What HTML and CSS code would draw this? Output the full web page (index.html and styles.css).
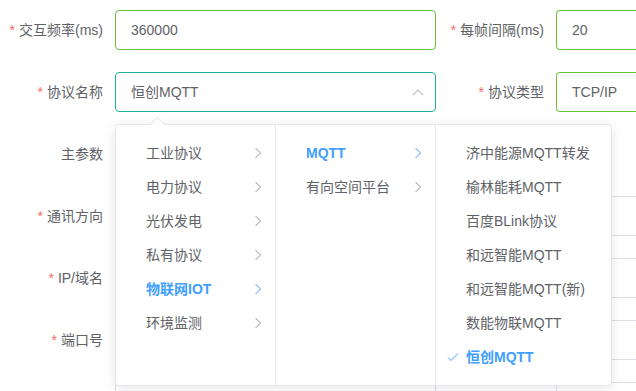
FILE: index.html
```html
<!DOCTYPE html>
<html lang="zh-CN">
<head>
    <meta charset="UTF-8">
    <meta name="viewport" content="width=device-width, initial-scale=1.0">
    <title>协议配置</title>
    <link rel="stylesheet" href="styles.css">
</head>
<body>

    <form class="form">
        <div class="row">
            <div class="item">
                <label class="label label-first"><span class="req">*</span>交互频率(ms)</label>
                <div class="control"><div class="input success">360000</div></div>
            </div>
            <div class="item">
                <label class="label label-second"><span class="req">*</span>每帧间隔(ms)</label>
                <div class="control control-second"><div class="input success">20</div></div>
            </div>
        </div>

        <div class="row">
            <div class="item">
                <label class="label label-first"><span class="req">*</span>协议名称</label>
                <div class="control">
                    <div class="input focus">
                        恒创MQTT
                        <span class="suffix">
                            <svg width="12" height="8" viewBox="0 0 12 8"><polyline points="1,7 6,2 11,7" fill="none" stroke="currentColor" stroke-width="1.2"/></svg>
                        </span>
                    </div>
                </div>
            </div>
            <div class="item">
                <label class="label label-second"><span class="req">*</span>协议类型</label>
                <div class="control control-second"><div class="input success">TCP/IP</div></div>
            </div>
        </div>

        <div class="row">
            <div class="item">
                <label class="label label-first">主参数</label>
            </div>
        </div>

        <!-- 以下行的右侧标签被下拉面板挡住，只保留占位 -->
        <div class="row">
            <div class="item">
                <label class="label label-first"><span class="req">*</span>通讯方向</label>
                <div class="control"><div class="input"></div></div>
            </div>
            <div class="item">
                <span class="label label-second"></span>
                <div class="control control-second"><div class="input"></div></div>
            </div>
        </div>

        <div class="row">
            <div class="item">
                <label class="label label-first"><span class="req">*</span>IP/域名</label>
                <div class="control"><div class="input"></div></div>
            </div>
            <div class="item">
                <span class="label label-second"></span>
                <div class="control control-second"><div class="input"></div></div>
            </div>
        </div>

        <div class="row">
            <div class="item">
                <label class="label label-first"><span class="req">*</span>端口号</label>
                <div class="control"><div class="input"></div></div>
            </div>
            <div class="item">
                <span class="label label-second"></span>
                <div class="control control-second"><div class="input"></div></div>
            </div>
        </div>

        <div class="row row-last">
            <div class="item">
                <span class="label label-first"></span>
                <div class="control"><div class="input"></div></div>
            </div>
            <div class="item">
                <span class="label label-second"></span>
                <div class="control control-second"><div class="input"></div></div>
            </div>
        </div>
    </form>

    <!-- 级联下拉面板 -->
    <div class="cascader">
        <span class="popper-arrow"></span>
        <div class="menu menu-1">
            <div class="node">工业协议<span class="postfix"><svg width="14" height="14" viewBox="0 0 14 14"><polyline points="4.5,2 9.5,7 4.5,12" fill="none" stroke="currentColor" stroke-width="1"/></svg></span></div>
            <div class="node">电力协议<span class="postfix"><svg width="14" height="14" viewBox="0 0 14 14"><polyline points="4.5,2 9.5,7 4.5,12" fill="none" stroke="currentColor" stroke-width="1"/></svg></span></div>
            <div class="node">光伏发电<span class="postfix"><svg width="14" height="14" viewBox="0 0 14 14"><polyline points="4.5,2 9.5,7 4.5,12" fill="none" stroke="currentColor" stroke-width="1"/></svg></span></div>
            <div class="node">私有协议<span class="postfix"><svg width="14" height="14" viewBox="0 0 14 14"><polyline points="4.5,2 9.5,7 4.5,12" fill="none" stroke="currentColor" stroke-width="1"/></svg></span></div>
            <div class="node active">物联网IOT<span class="postfix"><svg width="14" height="14" viewBox="0 0 14 14"><polyline points="4.5,2 9.5,7 4.5,12" fill="none" stroke="currentColor" stroke-width="1"/></svg></span></div>
            <div class="node">环境监测<span class="postfix"><svg width="14" height="14" viewBox="0 0 14 14"><polyline points="4.5,2 9.5,7 4.5,12" fill="none" stroke="currentColor" stroke-width="1"/></svg></span></div>
        </div>
        <div class="menu menu-2">
            <div class="node active">MQTT<span class="postfix"><svg width="14" height="14" viewBox="0 0 14 14"><polyline points="4.5,2 9.5,7 4.5,12" fill="none" stroke="currentColor" stroke-width="1"/></svg></span></div>
            <div class="node">有向空间平台<span class="postfix"><svg width="14" height="14" viewBox="0 0 14 14"><polyline points="4.5,2 9.5,7 4.5,12" fill="none" stroke="currentColor" stroke-width="1"/></svg></span></div>
        </div>
        <div class="menu menu-3">
            <div class="node">济中能源MQTT转发</div>
            <div class="node">榆林能耗MQTT</div>
            <div class="node">百度BLink协议</div>
            <div class="node">和远智能MQTT</div>
            <div class="node">和远智能MQTT(新)</div>
            <div class="node">数能物联MQTT</div>
            <div class="node active">
                <span class="prefix"><svg width="14" height="14" viewBox="0 0 14 14"><polyline points="2,7.5 5,10.5 12,3.5" fill="none" stroke="currentColor" stroke-width="1"/></svg></span>恒创MQTT
            </div>
        </div>
    </div>

</body>
</html>
```

FILE: styles.css
```css
body {
    margin: 0;
    width: 636px;
    height: 391px;
    overflow: hidden;
    position: relative;
    background-color: #fff;
    font-family: "Liberation Sans", "Noto Sans CJK SC", sans-serif;
    font-size: 14px;
    color: #606266;
}
.form {
    padding-top: 10px;
    height: 381px;
    overflow: hidden;
}
.row {
    display: flex;
    height: 40px;
    margin-bottom: 22px;
}
.row-last {
    margin-bottom: 0;
}
.item {
    display: flex;
}
.label {
    box-sizing: border-box;
    text-align: right;
    line-height: 40px;
    padding-right: 12px;
    white-space: nowrap;
    color: #606266;
}
.label-first {
    width: 115px;
}
.label-second {
    width: 120px;
}
.req {
    color: #f56c6c;
    margin-right: 4px;
}
.control {
    width: 321px;
}
/* 右侧输入框被窗口截断 */
.control-second {
    width: 80px;
}
.control-second .input {
    border-right: none;
    border-radius: 4px 0 0 4px;
}
.input {
    position: relative;
    box-sizing: border-box;
    height: 40px;
    line-height: 38px;
    padding: 0 15px;
    border: 1px solid #dcdfe6;
    border-radius: 4px;
    color: #606266;
    white-space: nowrap;
}
.input.success {
    border-color: #67c23a;
}
.input.focus {
    border-color: #1bb39e;
}
.suffix {
    position: absolute;
    right: 5px;
    top: 0;
    width: 25px;
    height: 38px;
    display: flex;
    align-items: center;
    justify-content: center;
    color: #c0c4cc;
}

/* 级联面板 */
.cascader {
    position: absolute;
    left: 115px;
    top: 124px;
    display: flex;
    background-color: #fff;
    border: 1px solid #e4e7ed;
    border-radius: 4px;
    box-shadow: 0 2px 12px 0 rgba(0,0,0,0.1);
}
.popper-arrow {
    position: absolute;
    left: 36px;
    top: -6px;
    width: 10px;
    height: 10px;
    background-color: #fff;
    border-top: 1px solid #e4e7ed;
    border-left: 1px solid #e4e7ed;
    transform: rotate(45deg);
}
.menu {
    box-sizing: border-box;
    padding: 11px 0;
    border-right: 1px solid #e4e7ed;
}
.menu-1,
.menu-2 {
    width: 160px;
}
.menu-3 {
    width: 175px;
    border-right: none;
}
.node {
    position: relative;
    height: 34px;
    line-height: 34px;
    padding: 0 30px 0 30px;
    white-space: nowrap;
    color: #606266;
}
.node.active {
    color: #409eff;
    font-weight: bold;
}
.postfix {
    position: absolute;
    right: 10px;
    top: 0;
    height: 34px;
    display: flex;
    align-items: center;
    color: #909399;
}
.node.active .postfix {
    color: #409eff;
}
.prefix {
    position: absolute;
    left: 10px;
    top: 0;
    height: 34px;
    display: flex;
    align-items: center;
    color: #409eff;
}
```
